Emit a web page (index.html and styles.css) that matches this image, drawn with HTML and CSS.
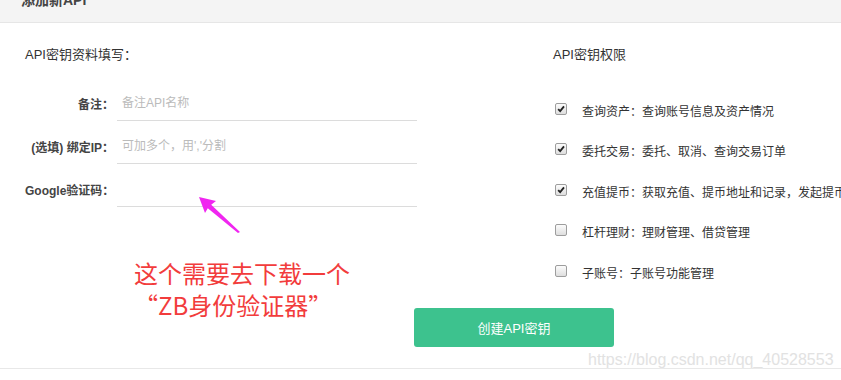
FILE: index.html
```html
<!DOCTYPE html>
<html lang="zh-CN">
  <head>
    <meta charset="UTF-8" />
    <title>添加新API</title>
    <link rel="stylesheet" href="styles.css">
  </head>
  <body class="body">
    <div class="page">
      <div class="header">
        <h2 class="header__title">添加新API</h2>
      </div>
      <div class="content">
        <div class="columns">
          <div class="form">
            <h3 class="section__title">API密钥资料填写：</h3>
            <div class="form__row">
              <label class="form__label" for="remark">备注：</label>
              <input class="form__input" id="remark" type="text" placeholder="备注API名称" />
            </div>
            <div class="form__row">
              <label class="form__label" for="ip">(选填) 绑定IP：</label>
              <input class="form__input" id="ip" type="text" placeholder="可加多个，用','分割" />
            </div>
            <div class="form__row">
              <label class="form__label" for="code">Google验证码：</label>
              <input class="form__input" id="code" type="text" />
            </div>
          </div>
          <div class="perms">
            <h3 class="section__title">API密钥权限</h3>
            <ul class="perms__list">
              <li class="perm">
                <span class="check check_on"><svg viewBox="0 0 12 12"><path d="M2.6 6.2 L5 8.6 L9.6 2.8" /></svg></span>
                <span class="perm__text">查询资产：查询账号信息及资产情况</span>
              </li>
              <li class="perm">
                <span class="check check_on"><svg viewBox="0 0 12 12"><path d="M2.6 6.2 L5 8.6 L9.6 2.8" /></svg></span>
                <span class="perm__text">委托交易：委托、取消、查询交易订单</span>
              </li>
              <li class="perm">
                <span class="check check_on"><svg viewBox="0 0 12 12"><path d="M2.6 6.2 L5 8.6 L9.6 2.8" /></svg></span>
                <span class="perm__text">充值提币：获取充值、提币地址和记录，发起提币</span>
              </li>
              <li class="perm">
                <span class="check"></span>
                <span class="perm__text">杠杆理财：理财管理、借贷管理</span>
              </li>
              <li class="perm">
                <span class="check"></span>
                <span class="perm__text">子账号：子账号功能管理</span>
              </li>
            </ul>
          </div>
        </div>
        <div class="actions">
          <button class="button" type="button">创建API密钥</button>
        </div>
      </div>

      <!-- annotation drawn over the screenshot -->
      <svg class="arrow" viewBox="190 190 55 48">
        <polygon points="199,197 216,201 211.2,204.7 240,232 238,233 207.8,208.3 205,213" />
      </svg>
      <div class="note">
        <p class="note__line">这个需要去下载一个</p>
        <p class="note__line">“ZB身份验证器”</p>
      </div>
      <div class="watermark">https://blog.csdn.net/qq_40528553</div>
    </div>
  </body>
</html>
```

FILE: styles.css
```css
.body {
  margin: 0;
  background-color: #fff;
  font-family: "Liberation Sans", "Noto Sans CJK SC", sans-serif;
  color: #333;
}
.page {
  position: relative;
  width: 841px;
  height: 380px;
  overflow: hidden;
}
.header {
  height: 22px;
  background-color: #f4f4f4;
  border-bottom: 1px solid #e6e6e6;
  overflow: hidden;
}
.header__title {
  margin: -8px 0 0 21px;
  font-size: 14px;
  line-height: 16px;
  font-weight: bold;
  color: #444;
}
.content {
  display: flex;
  flex-direction: column;
  padding-top: 22px;
  height: 323px;
  border-bottom: 1px solid #e8e8e8;
}
.columns {
  display: flex;
  flex-direction: row;
  height: 248px;
}
.form {
  flex-shrink: 0;
  width: 528px;
  padding-left: 25px;
}
.section__title {
  margin: 0;
  font-size: 13px;
  line-height: 20px;
  font-weight: normal;
  color: #333;
}
.form .section__title {
  margin-bottom: 21px;
}
.form__row {
  display: flex;
  flex-direction: row;
  align-items: center;
  height: 35px;
  margin-bottom: 8px;
}
.form__label {
  width: 89px;
  padding-right: 3px;
  text-align: right;
  font-size: 12px;
  font-weight: bold;
  color: #444;
  white-space: nowrap;
}
.form__input {
  box-sizing: border-box;
  width: 300px;
  height: 35px;
  margin: 0;
  padding: 0 5px;
  border: none;
  border-bottom: 1px solid #dcdcdc;
  outline: none;
  font-family: "Liberation Sans", "Noto Sans CJK SC", sans-serif;
  font-size: 12px;
  color: #333;
}
.form__input::placeholder {
  color: #bbb;
}
.perms {
  flex: 1;
  min-width: 0;
}
.perms .section__title {
  margin-bottom: 25px;
}
.perms__list {
  margin: 0;
  padding: 0 0 0 2px;
  list-style: none;
}
.perm {
  display: flex;
  flex-direction: row;
  align-items: center;
  height: 40.5px;
  white-space: nowrap;
}
.check {
  flex-shrink: 0;
  box-sizing: border-box;
  width: 12px;
  height: 12px;
  margin-top: -3px;
  margin-right: 15px;
  border: 1px solid #9d9d9d;
  border-radius: 2px;
  background: linear-gradient(#fcfcfc, #dedede);
}
.check svg {
  display: block;
  width: 10px;
  height: 10px;
}
.check path {
  fill: none;
  stroke: #222;
  stroke-width: 2.2;
}
.perm__text {
  font-size: 12px;
  color: #333;
}
.actions {
  margin-top: 15px;
  padding-left: 414px;
}
.button {
  width: 200px;
  height: 39px;
  border: none;
  border-radius: 3px;
  background-color: #3dc28e;
  color: #fff;
  font-family: "Liberation Sans", "Noto Sans CJK SC", sans-serif;
  font-size: 13px;
}
.arrow {
  position: absolute;
  left: 190px;
  top: 190px;
  width: 55px;
  height: 48px;
  fill: #f026f0;
}
.note {
  position: absolute;
  left: 134px;
  top: 257px;
  font-family: "Noto Sans CJK SC", sans-serif;
  font-size: 24px;
  line-height: 32px;
  color: #f23c3c;
}
.note__line {
  margin: 0;
}
.watermark {
  position: absolute;
  left: 588px;
  top: 351px;
  font-family: "Liberation Sans", sans-serif;
  font-size: 16px;
  color: #e2e2e2;
  text-shadow: 0 0 1px #fff;
}
```
